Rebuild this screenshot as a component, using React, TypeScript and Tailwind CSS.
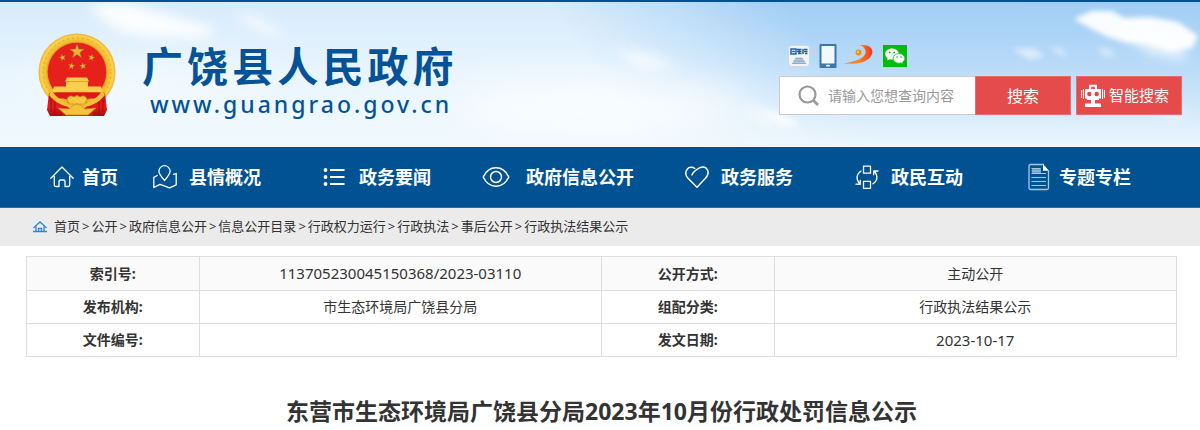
import type { ReactNode } from "react";

const line = { fill: "none", stroke: "currentColor", strokeWidth: 1.3, strokeLinejoin: "round", strokeLinecap: "round" } as const;

function Sky() {
  return (
    <svg className="absolute inset-0 h-full w-full" viewBox="0 0 1200 145" preserveAspectRatio="none" aria-hidden="true">
      <defs>
        <linearGradient id="skyLeft" x1="0" y1="0" x2="0" y2="1">
          <stop offset="0" stopColor="#d7ebfb" />
          <stop offset="0.5" stopColor="#e9f5fe" />
          <stop offset="1" stopColor="#f0f9fe" />
        </linearGradient>
        <linearGradient id="skyRight" x1="0" y1="0" x2="0" y2="1">
          <stop offset="0" stopColor="#a1cdf4" />
          <stop offset="0.45" stopColor="#b9dbf8" />
          <stop offset="0.8" stopColor="#d9ecfb" />
          <stop offset="1" stopColor="#ecf6fd" />
        </linearGradient>
        <linearGradient id="fade" gradientUnits="userSpaceOnUse" x1="610" y1="90" x2="770" y2="-20">
          <stop offset="0" stopColor="#000" />
          <stop offset="0.5" stopColor="#777" />
          <stop offset="1" stopColor="#fff" />
        </linearGradient>
        <mask id="rightMask">
          <rect width="1200" height="145" fill="url(#fade)" />
        </mask>
        <filter id="b2" x="-30%" y="-60%" width="160%" height="220%"><feGaussianBlur stdDeviation="2.5" /></filter>
        <filter id="b5" x="-30%" y="-60%" width="160%" height="220%"><feGaussianBlur stdDeviation="6" /></filter>
        <filter id="b18" x="-50%" y="-80%" width="200%" height="260%"><feGaussianBlur stdDeviation="18" /></filter>
      </defs>
      <rect width="1200" height="145" fill="url(#skyLeft)" />
      <rect width="1200" height="145" fill="url(#skyRight)" mask="url(#rightMask)" />
      <g fill="#fff">
        <ellipse cx="600" cy="105" rx="150" ry="26" opacity="0.7" filter="url(#b18)" />
        <ellipse cx="150" cy="85" rx="130" ry="22" opacity="0.4" filter="url(#b18)" />
        <path d="M88 2 L130 2 L160 10 L185 18 L214 26 L207 36 L150 35 L120 29 L100 16Z" opacity="0.9" filter="url(#b5)" />
        <path d="M235 8 L262 18 L286 34 L270 33 L244 20Z" opacity="0.7" filter="url(#b5)" />
        <path d="M612 46 L650 52 L680 66 L640 66Z" opacity="0.7" filter="url(#b5)" />
        <path d="M738 102 L780 112 L802 126 L760 120Z" opacity="0.7" filter="url(#b5)" />
        <path d="M1074 17 L1092 9 L1112 9 L1124 16 L1150 15 L1178 20 L1198 34 L1192 46 L1170 49 L1150 42 L1126 40 L1108 35 L1092 27Z" opacity="0.95" filter="url(#b2)" />
        <path d="M1110 24 L1180 30 L1186 58 L1150 52Z" opacity="0.7" filter="url(#b5)" />
        <path d="M1012 47 L1034 46 L1044 54 L1030 58Z" opacity="0.5" filter="url(#b2)" />
        <path d="M1050 45 L1062 46 L1068 55 L1058 52Z" opacity="0.4" filter="url(#b2)" />
        <path d="M1098 45 L1110 46 L1116 55 L1102 54Z" opacity="0.35" filter="url(#b2)" />
        <path d="M762 108 L785 114 L802 124 L780 122Z" opacity="0.6" filter="url(#b2)" />
        <path d="M1140 100 L1184 112 L1178 118Z" opacity="0.7" filter="url(#b5)" />
      </g>
    </svg>
  );
}

function Emblem() {
  const star = "M0,-7.6 L1.8,-2.4 L7.3,-2.3 L2.9,1 L4.5,6.2 L0,3.1 L-4.5,6.2 L-2.9,1 L-7.3,-2.3 L-1.8,-2.4Z";
  return (
    <svg className="h-[84px] w-[78px] shrink-0" viewBox="0 0 78 84" role="img" aria-label="国徽">
      <defs>
        <radialGradient id="gold" cx="39" cy="39" r="39" gradientUnits="userSpaceOnUse">
          <stop offset="0.72" stopColor="#c98d17" />
          <stop offset="0.8" stopColor="#f3bb31" />
          <stop offset="0.93" stopColor="#fcd24c" />
          <stop offset="1" stopColor="#e2a724" />
        </radialGradient>
        <linearGradient id="silk" x1="0" y1="0" x2="0" y2="1">
          <stop offset="0" stopColor="#c50f12" />
          <stop offset="0.6" stopColor="#e81c1c" />
          <stop offset="1" stopColor="#a50c0e" />
        </linearGradient>
      </defs>
      <circle cx="39" cy="39" r="38.5" fill="url(#gold)" />
      <circle cx="39" cy="39" r="34" fill="none" stroke="#e0a526" strokeWidth="1" strokeDasharray="2 3" />
      <circle cx="39" cy="39" r="29.3" fill="#e6211c" />
      <g fill="#e8b53a" stroke="#a9651b" strokeWidth="0.5">
        <path d={star} transform="translate(39 18.5)" />
        <path d={star} transform="translate(24.500 24.500) scale(0.46) rotate(-15)" />
        <path d={star} transform="translate(53.500 24.500) scale(0.46) rotate(15)" />
        <path d={star} transform="translate(33.500 33) scale(0.46) rotate(10)" />
        <path d={star} transform="translate(45 33) scale(0.46) rotate(-10)" />
      </g>
      <path d="M29 44.500h20l2 4h-1v5h13l2 6H14l2-6h12v-5h-1z" fill="#fbcf4c" />
      <path d="M28 48.500h22" stroke="#d89b23" strokeWidth="0.8" />
      <path d="M12 59.500h54l-6 6H18z" fill="#d81a18" />
      <path d="M11 60 C16 66 23 68 32 70 L25 83 H12 L9 77 Z M67 60 C62 66 55 68 46 70 L53 83 H66 L69 77 Z" fill="url(#silk)" />
      <path d="M14 58 C20 67 29 71 39 71 S58 67 64 58 L67 62 C61 70 50 75 39 75 S17 70 11 62Z" fill="#f5bf38" />
      <path d="M25 73 L39 77 L53 73 L55 83 H24Z" fill="#d51616" />
      <path d="M13 66v13M17 69v13M65 66v13M61 69v13" stroke="#8f0d10" strokeWidth="0.8" />
      <path d="M29 66 Q31 61 36 64 Q39 61 42 64 Q47 61 49 66 L47 71 H31Z" fill="#f8c842" stroke="#c98a1b" strokeWidth="0.7" />
      <path d="M20 75 L31 76 Q35 71 39 71 Q43 71 47 76 L58 75 L50 82 H28Z" fill="#f6c23d" stroke="#c98a1b" strokeWidth="0.7" />
    </svg>
  );
}

const HomeIcon = () => (
  <svg className="h-6 w-6" viewBox="0 0 24 24" aria-hidden="true" {...line}>
    <path d="M.8 13.200 L12 2 L23.200 13.200 M4.300 11.500 V20 Q4.300 21.500 5.800 21.500 H9 V16.500 Q9 15 10.500 15 H13.500 Q15 15 15 16.500 V21.500 H18.200 Q19.700 21.500 19.700 20 V11.500" />
  </svg>
);
const MapIcon = () => (
  <svg className="h-6 w-6" viewBox="0 0 24 24" aria-hidden="true" {...line}>
    <path d="M11.500 15.500 C8 11.500 5.900 9 5.900 6.300 a5.600 5.600 0 0 1 11.200 0 C17.100 9 15 11.500 11.500 15.500Z M4.300 10.500 L.8 12.300 V22.500 L7 19.300 L16.500 22.800 L23.200 19.800 V8.500 L20.500 9.300" />
  </svg>
);
const ListIcon = () => (
  <svg className="h-6 w-6" viewBox="0 0 24 24" aria-hidden="true">
    <path d="M7 5h14.500M7 12h14.500M7 19h14.500" stroke="currentColor" strokeWidth="1.8" />
    <g fill="currentColor"><circle cx="2.500" cy="5" r="1.900" /><circle cx="2.500" cy="12" r="1.900" /><circle cx="2.500" cy="19" r="1.900" /></g>
  </svg>
);
const EyeIcon = () => (
  <svg className="h-6 w-7" viewBox="0 0 28 24" aria-hidden="true" {...line} strokeWidth={1.5}>
    <path d="M1.200 12 C4 6 9 2.800 14 2.800 S24 6 26.800 12 C24 18 19 21.200 14 21.200 S4 18 1.200 12Z" />
    <circle cx="14" cy="12" r="5.500" />
  </svg>
);
const HeartIcon = () => (
  <svg className="h-6 w-6" viewBox="0 0 24 24" aria-hidden="true" {...line} strokeWidth={1.5}>
    <path d="M7 9.800 C7.500 7.800 11 4.900 14.500 2.800 C18 1.300 21 2.300 22.400 4.800 C24 8 23 10.500 20.500 13.200 L12 22.300 L3 13.200 C.6 10.500 .2 7.300 1.900 4.600 C3.800 1.900 7.500 1.700 9.800 3.500" />
  </svg>
);
const SwapIcon = () => (
  <svg className="h-6 w-6" viewBox="0 0 24 24" aria-hidden="true" {...line}>
    <path d="M8.500 1.200h7v7h-7z M8.500 16.300h7v7h-7z M6 6 C1.500 9 .5 14 4.800 18.800 M1 19.200 L5.200 19.400 L5.400 15.300 M18 18.800 C22.500 16 23.500 11 19.200 6.300 M23 6 L18.800 5.800 L18.600 9.800" />
  </svg>
);
const DocIcon = () => (
  <svg className="h-7 w-6" viewBox="0 0 24 28" aria-hidden="true">
    <path d="M17 1.500H3.500q-1.500 0-1.500 1.500v22q0 1.500 1.500 1.500h16.500q1.500 0 1.500-1.500V7.500" fill="none" stroke="#a9c7e0" strokeWidth="1.300" />
    <path d="M16 1 L22 7.800 H16Z" fill="#fff" />
    <path d="M5 5.500h9v4.500H5z" fill="#6f9fc8" />
    <path d="M4.500 5.500h9M4.500 8h9M4.500 10.500h14.500M4.500 14.500h14.500M4.500 18.500h14.500M4.500 22.500h14.500" stroke="#a9c7e0" strokeWidth="1.200" />
  </svg>
);

function Robot() {
  return (
    <svg className="h-6 w-6 shrink-0" viewBox="0 0 24 24" aria-hidden="true">
      <path d="M8 5V.8h8V5h-2.200V2.800h-3.600V5z M4 5h16v11H4z M10 16h4v4h-4z M4 19.500h16v3.500H4z" fill="#fff" />
      <path d="M.6 6v8M2.500 5v10M21.500 5v10M23.400 6v8" stroke="#fff" strokeWidth="1" />
      <path d="M4 14.500h2v1.500H4zM18 14.500h2v1.500h-2z" fill="#e54b4b" />
      <circle cx="8.300" cy="10" r="2.200" fill="#d94747" />
      <circle cx="15.700" cy="10" r="2.200" fill="#d94747" />
    </svg>
  );
}

function QuickLinks() {
  return (
    <nav aria-label="快捷入口" className="flex h-6 items-center pl-[9px]">
      <a href="#gwy" aria-label="国务院" className="mr-[9px] flex h-[22px] w-[22px] flex-col items-center overflow-hidden rounded border border-[#cfd8df] bg-[#f1f4f7]">
        <svg className="h-full w-full" viewBox="0 0 20 20" aria-hidden="true">
          <path d="M2 3h5v5H2z M3.200 5.500h2.600 M8 3.500h4.500M8 5.500h4.500M9 7.500h3.500M10.300 3v5 M14 3v5M15 3.500h3.500M15 5.500h3.500M16 7.500h2.500" fill="none" stroke="#1f62a5" strokeWidth="1.500" />
          <path d="M7 11.500h6l4.500 6.500h-15z" fill="#b5c6d8" />
          <path d="M6 12.500h8M4.500 15h11M3 17.500h14" stroke="#8ba6c3" strokeWidth="0.800" />
        </svg>
      </a>
      <a href="#mobile" aria-label="手机版" className="mr-[6px]">
        <svg className="h-6 w-[18px]" viewBox="0 0 18 24" aria-hidden="true">
          <rect x="0.500" width="17" height="24" rx="1" fill="#3a78ab" />
          <rect x="2.500" y="2" width="13" height="17.500" fill="#f1f8ff" />
          <rect x="7" y="20.800" width="4" height="1.800" rx="0.900" fill="#e8f3fc" />
        </svg>
      </a>
      <a href="#portal" aria-label="门户" className="mr-[10px]">
        <svg className="h-6 w-[30px]" viewBox="0 0 30 24" aria-hidden="true">
          <defs>
            <linearGradient id="swoosh" x1="0" y1="0" x2="1" y2="0">
              <stop offset="0" stopColor="#e8622c" />
              <stop offset="0.5" stopColor="#fb8a23" />
              <stop offset="1" stopColor="#f8341c" />
            </linearGradient>
          </defs>
          <path d="M.5 19.500 C10 18 19 15.500 22 10.500 C24 6.500 21 2.500 17 1.300 C24 -.2 30 3.300 29.300 8.500 C28.500 14.500 21 19 12 19.500 C8 19.700 4 19.500 .5 19.500Z" fill="url(#swoosh)" />
          <circle cx="15.500" cy="8.500" r="3" fill="#f98a1c" />
          <circle cx="15" cy="7.900" r="1.200" fill="#fdd04e" />
        </svg>
      </a>
      <a href="#wechat" aria-label="微信">
        <svg className="h-[22px] w-6" viewBox="0 0 24 22" aria-hidden="true">
          <rect width="24" height="22" fill="#04bb0a" />
          <path d="M9 3.500c-3.900 0-6.800 2.400-6.800 5.500 0 1.800 1 3.300 2.500 4.300L4 15.600l2.600-1.300c.8.200 1.600.3 2.400.3 3.900 0 6.800-2.500 6.800-5.600S12.900 3.500 9 3.500z" fill="#fff" />
          <path d="M16 8.600c-3.300 0-5.800 2.100-5.800 4.800s2.500 4.800 5.800 4.800c.7 0 1.300-.1 1.900-.3l2.200 1.200-.6-2c1.400-.9 2.300-2.200 2.300-3.700 0-2.700-2.500-4.800-5.800-4.800z" fill="#fff" stroke="#04bb0a" strokeWidth="0.700" />
          <g fill="#04bb0a"><circle cx="6.800" cy="7.500" r="0.900" /><circle cx="11.200" cy="7.500" r="0.900" /><circle cx="14" cy="12" r="0.800" /><circle cx="18" cy="12" r="0.800" /></g>
        </svg>
      </a>
    </nav>
  );
}

const navItems: { label: string; icon: ReactNode; gap: string }[] = [
  { label: "首页", icon: <HomeIcon />, gap: "gap-2" },
  { label: "县情概况", icon: <MapIcon />, gap: "gap-3" },
  { label: "政务要闻", icon: <ListIcon />, gap: "gap-3" },
  { label: "政府信息公开", icon: <EyeIcon />, gap: "gap-4" },
  { label: "政务服务", icon: <HeartIcon />, gap: "gap-3" },
  { label: "政民互动", icon: <SwapIcon />, gap: "gap-3" },
  { label: "专题专栏", icon: <DocIcon />, gap: "gap-2" },
];

const crumbs = ["首页", "公开", "政府信息公开", "信息公开目录", "行政权力运行", "行政执法", "事后公开", "行政执法结果公示"];

const rows = [
  ["索引号:", "113705230045150368/2023-03110", "公开方式:", "主动公开"],
  ["发布机构:", "市生态环境局广饶县分局", "组配分类:", "行政执法结果公示"],
  ["文件编号:", "", "发文日期:", "2023-10-17"],
];

function Value({ text }: { text: string }) {
  const numeric = /^[\d/-]+$/.test(text);
  return <td className={numeric ? "border border-[#dedede] text-[15px]" : "border border-[#dedede] text-sm"}>{text}</td>;
}

export default function App() {
  return (
    <div className="bg-white font-['Noto_Sans','Noto_Sans_CJK_SC',sans-serif] text-[#333]">
      <header className="relative border-t-2 border-[#005293]">
        <Sky />
        <div className="relative flex h-[145px] items-start justify-between pr-[18px] pl-[38px]">
          <a href="#home" className="flex items-start gap-[26px] pt-[31px] text-[#055396]">
            <Emblem />
            <span className="flex flex-col pt-[9px]">
              <span className="text-[41px] leading-[48px] font-bold tracking-widest">广饶县人民政府</span>
              <span className="pl-2 text-[23px] leading-7 font-medium tracking-[3px]">www.guangrao.gov.cn</span>
            </span>
          </a>
          <div className="flex flex-col gap-2 pt-[42px]">
            <QuickLinks />
            <form className="flex h-[39px]" onSubmit={(e) => e.preventDefault()}>
              <label className="flex w-[196px] items-center gap-2 border border-r-0 border-[#ccc] bg-white pl-[18px]">
                <svg className="h-[22px] w-[22px] shrink-0" viewBox="0 0 22 22" fill="none" stroke="#999" aria-hidden="true">
                  <circle cx="9.500" cy="9.500" r="8" strokeWidth="2.200" />
                  <path d="M15.200 15.200 L20 20" strokeWidth="2.800" />
                </svg>
                <input type="search" aria-label="搜索内容" placeholder="请输入您想查询内容" className="w-full min-w-0 bg-transparent text-sm outline-none placeholder:text-[#999]" />
              </label>
              <button type="submit" className="w-24 border border-[#e27070] bg-[#e54b4b] text-base text-white">搜索</button>
              <button type="button" className="ml-[5px] flex w-[106px] items-center gap-1 border border-[#e27070] bg-[#e54b4b] pl-1 text-[15px] text-white">
                <Robot />
                智能搜索
              </button>
            </form>
          </div>
        </div>
      </header>

      <nav aria-label="主导航" className="border-b border-[#2a6ea6] bg-[#005293] pr-9 pl-[46px]">
        <ul className="grid h-[60px] grid-cols-[76fr_170fr_170fr_192fr_170fr_170fr_170fr] items-center text-white">
          {navItems.map((item) => (
            <li key={item.label}>
              <a href="#nav" className={`flex items-center justify-center ${item.gap} text-lg font-bold whitespace-nowrap`}>
                {item.icon}
                {item.label}
              </a>
            </li>
          ))}
        </ul>
      </nav>

      <nav aria-label="当前位置" className="flex h-[38px] items-center gap-[6px] bg-[#ebebeb] pl-8 text-[13px]">
        <svg className="h-4 w-4" viewBox="0 0 16 16" fill="none" stroke="#2f86d6" strokeWidth="1.300" aria-hidden="true">
          <path d="M1.500 9 L8 3 L14.500 9 M4 7.500v5 M12 7.500v5 M6.500 12.500V9.500h3v3 M1 12.500h14" />
        </svg>
        <ol className="flex">
          {crumbs.map((c, i) => (
            <li key={c}>
              {i > 0 && <span className="mx-[2px]">&gt;</span>}
              <a href="#crumb">{c}</a>
            </li>
          ))}
        </ol>
      </nav>

      <main className="pt-[10px] pr-[23px] pl-[26px]">
        <table className="w-full table-fixed border-collapse text-center">
          <colgroup>
            <col className="w-[15%]" />
            <col className="w-[35%]" />
            <col className="w-[15%]" />
            <col className="w-[35%]" />
          </colgroup>
          <tbody>
            {rows.map((r) => (
              <tr key={r[0]} className="h-[33px] first:h-[34px] first:bg-[#fafafa]">
                <th scope="row" className="border border-[#dedede] text-sm font-bold">{r[0]}</th>
                <Value text={r[1]} />
                <th scope="row" className="border border-[#dedede] text-sm font-bold">{r[2]}</th>
                <Value text={r[3]} />
              </tr>
            ))}
          </tbody>
        </table>
        <h1 className="pt-9 text-center text-[23px] leading-9 font-bold">东营市生态环境局广饶县分局2023年10月份行政处罚信息公示</h1>
      </main>
    </div>
  );
}
